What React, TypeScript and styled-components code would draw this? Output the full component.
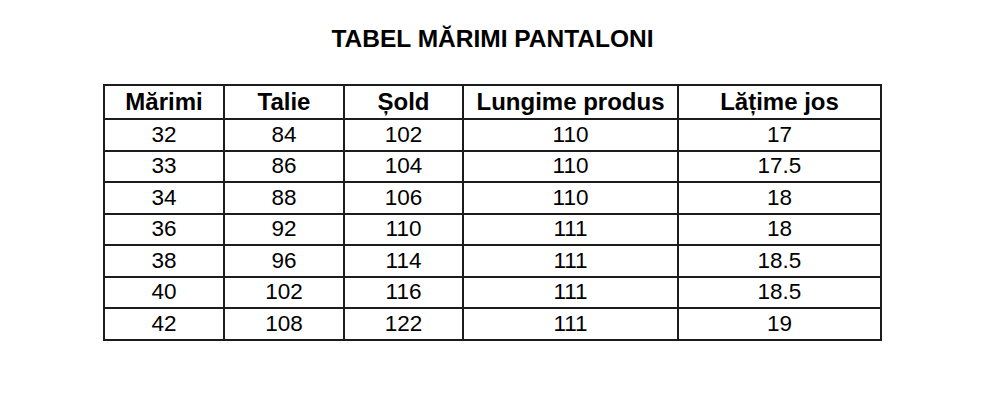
import React from 'react'
import styled, { createGlobalStyle } from 'styled-components'

const GlobalStyle = createGlobalStyle`
  html, body {
    margin: 0;
    padding: 0;
    background: #ffffff;
  }
  body {
    font-family: 'Liberation Sans', Arial, sans-serif;
    color: #000000;
  }
`

const Page = styled.div`
  width: 1000px;
  height: 402px;
  box-sizing: border-box;
  padding: 25px 0 0 103px;
  overflow: hidden;
`

const Sheet = styled.section`
  width: 779px;
  display: flex;
  flex-direction: column;
  gap: 31px;
`

const Title = styled.h1`
  margin: 0;
  font-size: 24.5px;
  font-weight: 700;
  line-height: 28px;
  text-align: center;
`

const Grid = styled.div`
  display: grid;
  grid-template-columns: 118px 118px 117px 213px 201px;
  grid-template-rows: 32px repeat(7, 29.5px);
  gap: 2px;
  padding: 2px;
  background: #1c1c1c;
`

const Cell = styled.div<{ $head?: boolean }>`
  display: flex;
  align-items: center;
  justify-content: center;
  background: #ffffff;
  font-size: ${(p) => (p.$head ? '24px' : '22.5px')};
  font-weight: ${(p) => (p.$head ? 700 : 400)};
  line-height: 20px;
  white-space: nowrap;
`

const columns = ['Mărimi', 'Talie', 'Șold', 'Lungime produs', 'Lățime jos']

const rows = [
  ['32', '84', '102', '110', '17'],
  ['33', '86', '104', '110', '17.5'],
  ['34', '88', '106', '110', '18'],
  ['36', '92', '110', '111', '18'],
  ['38', '96', '114', '111', '18.5'],
  ['40', '102', '116', '111', '18.5'],
  ['42', '108', '122', '111', '19'],
]

export default function App() {
  return (
    <>
      <GlobalStyle />
      <Page>
        <Sheet>
          <Title>TABEL MĂRIMI PANTALONI</Title>
          <Grid>
            {columns.map((c) => (
              <Cell key={c} $head>
                {c}
              </Cell>
            ))}
            {rows.map((r, i) =>
              r.map((v, j) => <Cell key={`${i}-${j}`}>{v}</Cell>)
            )}
          </Grid>
        </Sheet>
      </Page>
    </>
  )
}
